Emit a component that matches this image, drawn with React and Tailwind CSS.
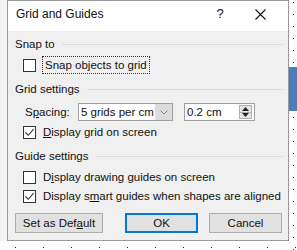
import React from 'react';

const font = { fontFamily: '"Liberation Sans", Arial, sans-serif' };

const Check = ({ checked }) => (
  <span className="w-[13px] h-[13px] border border-[#333] bg-white flex items-center justify-center shrink-0">
    {checked && (
      <svg width="11" height="11" viewBox="0 0 11 11">
        <path d="M1.5 5.5 L4.2 8.3 L9.6 2.2" fill="none" stroke="#333" strokeWidth="1.1" />
      </svg>
    )}
  </span>
);

const Header = ({ label }) => (
  <div className="flex items-center h-4 pl-[7px] pr-[5px]">
    <span className="whitespace-nowrap">{label}</span>
    <span className="flex-1 h-px bg-[#dcdcdc] ml-[7px]"></span>
  </div>
);

const CheckRow = ({ checked, children, className = '' }) => (
  <div className={'flex items-center h-4 pl-[15px] gap-[7px] whitespace-nowrap ' + className}>
    <Check checked={checked} />
    {children}
  </div>
);

const App = () => {
  const bottomDots = Array.from({ length: 11 }, (_, i) => i);
  const sideDots = Array.from({ length: 20 }, (_, i) => i);

  return (
    <div className="w-[297px] h-[250px] bg-white flex overflow-hidden text-[11.5px] leading-4 text-[#111]" style={font}>
      <div className="w-[7px] h-[241px] bg-[#f3f3f3] shrink-0"></div>

      <div className="w-[282px] shrink-0 flex flex-col">
        <div className="h-[241px] border border-[#9a9a9a] bg-[#f0f0f0] flex flex-col">
          <div className="h-[30px] bg-white flex items-center pl-2 text-[12px]">
            <span className="flex-1 mt-[-4px]">Grid and Guides</span>
            <span className="mt-[-4px] w-[16px] text-center text-[13px]">?</span>
            <span className="w-[60px] flex justify-center mt-[-4px] pl-[4px]">
              <svg width="11" height="11" viewBox="0 0 11 11">
                <path d="M0.5 0.5 L10.5 10.5 M10.5 0.5 L0.5 10.5" stroke="#111" strokeWidth="1.1" />
              </svg>
            </span>
          </div>

          <div className="mt-[5px]">
            <Header label="Snap to" />
          </div>
          <CheckRow checked={false} className="mt-[5px]">
            <span className="outline-1 outline-dotted outline-[#333] px-[2px]">
              Snap objects to <span className="underline">g</span>rid
            </span>
          </CheckRow>

          <div className="mt-2">
            <Header label="Grid settings" />
          </div>
          <div className="flex items-center h-[18px] mt-[6px] pl-[17px] whitespace-nowrap">
            <span className="w-[53px]">
              S<span className="underline">p</span>acing:
            </span>
            <div className="w-[95px] h-[18px] border border-[#a0a0a0] bg-white flex">
              <span className="flex-1 pl-[2px] leading-4">5 grids per cm</span>
              <span className="w-[17px] bg-[#dcdcdc] flex items-center justify-center">
                <svg width="8" height="5" viewBox="0 0 8 5">
                  <path d="M0.5 0.5 L4 4 L7.5 0.5" fill="none" stroke="#888" strokeWidth="1" />
                </svg>
              </span>
            </div>
            <div className="w-[71px] h-[18px] ml-[11px] border border-[#a0a0a0] bg-white flex">
              <span className="flex-1 pl-[2px] leading-4">0.2 cm</span>
              <span className="w-[13px] my-px mr-[2px] flex flex-col border border-[#b0b0b0] bg-[#e6e6e6]">
                <span className="flex-1 flex items-center justify-center border-b border-[#b0b0b0]">
                  <svg width="7" height="4" viewBox="0 0 7 4"><path d="M0 4 L3.5 0 L7 4 Z" fill="#222" /></svg>
                </span>
                <span className="flex-1 flex items-center justify-center">
                  <svg width="7" height="4" viewBox="0 0 7 4"><path d="M0 0 L3.5 4 L7 0 Z" fill="#222" /></svg>
                </span>
              </span>
            </div>
          </div>
          <CheckRow checked className="mt-[3px]">
            <span>
              <span className="underline">D</span>isplay grid on screen
            </span>
          </CheckRow>

          <div className="mt-2">
            <Header label="Guide settings" />
          </div>
          <CheckRow checked={false} className="mt-[5px]">
            <span>
              D<span className="underline">i</span>splay drawing guides on screen
            </span>
          </CheckRow>
          <CheckRow checked className="mt-[3px]">
            <span>
              Display s<span className="underline">m</span>art guides when shapes are aligned
            </span>
          </CheckRow>

          <div className="flex mt-[9px] pl-[7px] whitespace-nowrap">
            <button className="w-[88px] h-[20px] border border-[#adadad] bg-[#e1e1e1] leading-4">
              Set as Def<span className="underline">a</span>ult
            </button>
            <button className="w-[73px] h-[20px] ml-[22px] border-2 border-[#0078d7] bg-[#e1e1e1] leading-4">
              OK
            </button>
            <button className="w-[73px] h-[20px] ml-[11px] border border-[#adadad] bg-[#e1e1e1] leading-4">
              Cancel
            </button>
          </div>
        </div>
        <div className="flex gap-[27px] pl-[8px] mt-[6px]">
          {bottomDots.map((i) => (
            <span key={i} className="w-px h-px bg-[#222] shrink-0"></span>
          ))}
        </div>
      </div>

      <div className="w-[8px] shrink-0 flex flex-col">
        <div className="h-[68px] flex flex-col items-center gap-[11px] pt-[2px] pl-[1px]">
          {sideDots.slice(0, 6).map((i) => (
            <span key={i} className="w-px h-px bg-[#222]"></span>
          ))}
        </div>
        <div className="h-[44px] bg-[#4a7fbf] flex flex-col items-center gap-[11px] pt-[6px]">
          {sideDots.slice(0, 4).map((i) => (
            <span key={i} className="w-px h-px bg-[#c06060]"></span>
          ))}
        </div>
        <div className="flex flex-col items-center gap-[11px] pt-[6px] pl-[1px]">
          {sideDots.slice(0, 12).map((i) => (
            <span key={i} className="w-px h-px bg-[#222]"></span>
          ))}
        </div>
      </div>
    </div>
  );
};

export default App;
